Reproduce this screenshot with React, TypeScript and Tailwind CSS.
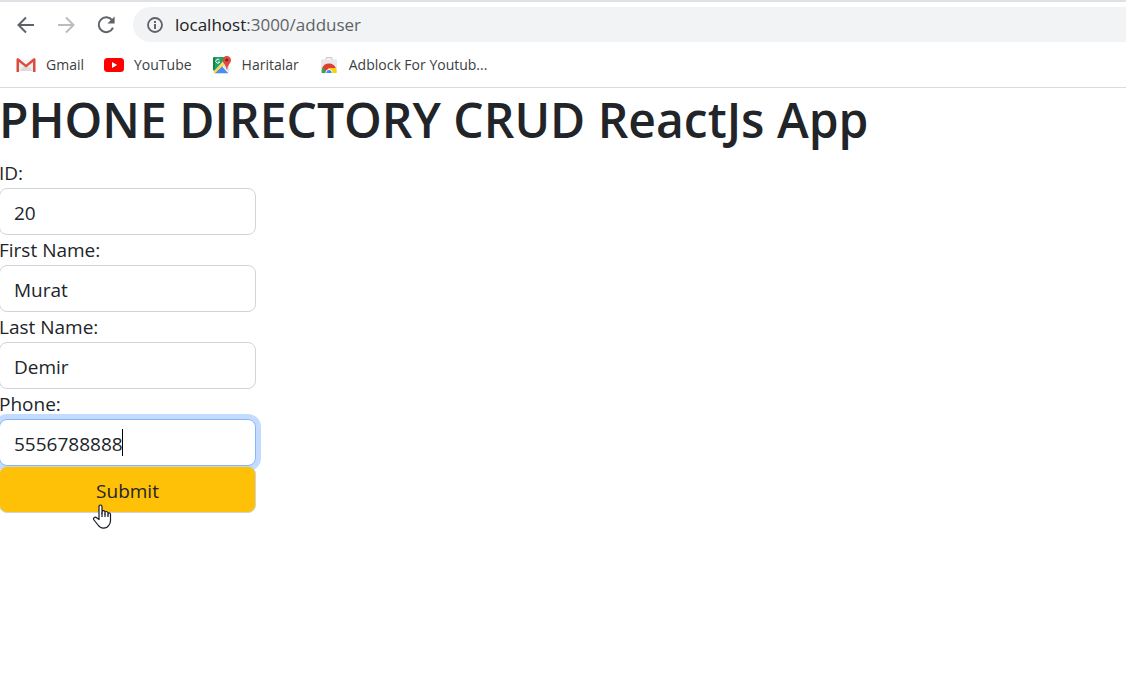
import React from "react";

const ArrowIcon = ({ flipped = false }: { flipped?: boolean }) => (
  <svg viewBox="0 0 18 18" className="h-[18px] w-[18px]" fill="none" stroke="currentColor" strokeWidth="2">
    <path d={flipped ? "M1 9H16M9 1.5L16.5 9L9 16.5" : "M17 9H2M9 1.5L1.5 9L9 16.5"} />
  </svg>
);

const ReloadIcon = () => (
  <svg viewBox="0 0 18 18" className="h-[18px] w-[18px]">
    <path d="M15.2 4.4A7.4 7.4 0 1 0 16 11.6" fill="none" stroke="currentColor" strokeWidth="2" />
    <path d="M17.6 0.6V7.4H10.4Z" fill="currentColor" />
  </svg>
);

const InfoIcon = () => (
  <svg viewBox="0 0 16 16" className="h-4 w-4 shrink-0">
    <circle cx="8" cy="8" r="7" fill="none" stroke="currentColor" strokeWidth="1.8" />
    <path d="M7 7h2v5H7zM7 4h2v2H7z" fill="currentColor" />
  </svg>
);

const GmailIcon = () => (
  <svg viewBox="0 0 20 20" className="h-5 w-5">
    <path d="M2 4h16v12H2z" fill="#eeeeee" />
    <path d="M3 16L10 9.5L17 16z" fill="#dcdcdc" />
    <path d="M2 4L10 10.5L18 4V4H2z" fill="#f6f6f6" />
    <path d="M0.5 4.5Q0.5 3 2 3L10 9.4L18 3Q19.5 3 19.5 4.5V17H17V7L10 12.4L3 7V17H0.5z" fill="#dc4b40" />
  </svg>
);

const YouTubeIcon = () => (
  <svg viewBox="0 0 20 20" className="h-5 w-5">
    <rect y="3" width="20" height="14" rx="3.5" fill="#ff0000" />
    <path d="M8 7L13.2 10L8 13z" fill="#ffffff" />
  </svg>
);

const MapsIcon = () => (
  <svg viewBox="0 0 20 20" className="h-5 w-5">
    <path d="M2 2h13L2 16.5z" fill="#1fa463" />
    <path d="M1 17L14.5 3.5L17 6L4 19z" fill="#ffd94f" />
    <path d="M3 18.3L10 11.5L16.5 18.3z" fill="#4c8bf5" />
    <path d="M10.5 11L16 6L17.5 17.5z" fill="#dcdfe3" />
    <path d="M1 2.5V15.8L3 14V2z" fill="#15824d" />
    <path d="M7.5 5A2 2 0 1 0 7.7 7H6" fill="none" stroke="#ffffff" strokeWidth="1" />
    <path d="M14.8 1C12.3 1 10.7 2.8 10.7 5C10.7 8.3 14 9.5 14.6 14.5H15.2C15.7 9.5 19 8.3 19 5C19 2.8 17.2 1 14.8 1z" fill="#e04a3f" />
    <circle cx="14.8" cy="5" r="1.6" fill="#7b231e" />
  </svg>
);

const WebStoreIcon = () => (
  <svg viewBox="0 0 20 20" className="h-5 w-5">
    <path d="M7 5V3.6Q7 2.7 8 2.7H12Q13 2.7 13 3.6V5" fill="none" stroke="#c8c8c8" strokeWidth="1.2" />
    <path d="M2 4.5h16v12.7q0 .8-.8.8H2.8q-.8 0-.8-.8z" fill="#e8e8e8" />
    <path d="M3.2 12.8A7.4 7.4 0 0 1 16.8 13H10L7 17z" fill="#df3e32" />
    <path d="M3.2 12.8Q2.4 15 2.7 18H8L6.8 15.8z" fill="#2ca653" />
    <path d="M10 13H17Q18 15.5 17.4 18H11.5z" fill="#fcd009" />
    <path d="M6.5 18V17a3.6 3.6 0 0 1 7 0v1z" fill="#ffffff" />
    <path d="M7.3 18V17a2.8 2.8 0 0 1 5.4 0v1z" fill="#4285f4" />
  </svg>
);

const HandPointer = () => (
  <svg viewBox="0 0 20 26" className="pointer-events-none absolute left-[94px] top-[38px] h-[26px] w-5">
    <path
      d="M6 15.5V2.8Q6 1 7.5 1T9 2.8V9.3V8Q9 6.6 10.4 6.6T12 8V10V8.8Q12 7.5 13.3 7.5T15 8.9V10.8V10Q15 8.9 16.1 8.9T17.5 10.2V16.5Q17.5 19.5 15.8 21.3Q14 24.2 10.5 24.2Q7 24 5 21L1 16Q.1 14.4 1.3 13.5T4 14L6 15.5z"
      fill="#ffffff"
      stroke="#17172b"
      strokeWidth="1.2"
      strokeLinejoin="round"
    />
    <path d="M9 8.5V13M12 9.5V13M15 10.5V13" stroke="#17172b" strokeWidth="1.2" />
  </svg>
);

const bookmarks = [
  { name: "Gmail", href: "#gmail", icon: <GmailIcon /> },
  { name: "YouTube", href: "#youtube", icon: <YouTubeIcon /> },
  { name: "Haritalar", href: "#maps", icon: <MapsIcon /> },
  { name: "Adblock For Youtub...", href: "#adblock", icon: <WebStoreIcon /> },
];

const fields = [
  { id: "id", label: "ID:", value: "20" },
  { id: "firstName", label: "First Name:", value: "Murat" },
  { id: "lastName", label: "Last Name:", value: "Demir" },
  { id: "phone", label: "Phone:", value: "5556788888", active: true },
];

export default function App() {
  return (
    <div className="min-h-screen overflow-x-hidden bg-white font-['Open_Sans','Noto_Sans',sans-serif] text-[#212529]">
      <header className="border-t-2 border-b border-t-[#dee1e6] border-b-[#dadce0]">
        <div className="flex items-center pt-[5px] pl-[17px] text-[#5f6368]">
          <nav aria-label="History" className="flex gap-[22px] pr-[18px]">
            <button type="button" aria-label="Back"><ArrowIcon /></button>
            <button type="button" aria-label="Forward" className="text-[#babcbe]"><ArrowIcon flipped /></button>
            <button type="button" aria-label="Reload"><ReloadIcon /></button>
          </nav>
          <div className="flex h-[35px] min-w-0 flex-1 items-center gap-3 rounded-l-full bg-[#f1f3f4] pl-[14px]">
            <InfoIcon />
            <a href="#adduser" className="text-[17px]">
              <span className="text-[#202124]">localhost</span>:3000/adduser
            </a>
          </div>
        </div>
        <nav aria-label="Bookmarks" className="flex h-[45px] items-center gap-5 pl-4 text-sm text-[#3c4043]">
          {bookmarks.map((b) => (
            <a key={b.name} href={b.href} className="flex items-center gap-[10px] whitespace-nowrap">
              {b.icon}
              {b.name}
            </a>
          ))}
        </nav>
      </header>
      <main className="-ml-px">
        <h1 className="mb-[6px] text-5xl leading-[64px] font-semibold">PHONE DIRECTORY CRUD ReactJs App</h1>
        <form className="w-[257px] text-[19px] leading-[30px]" onSubmit={(e) => e.preventDefault()}>
          {fields.map((f) => (
            <div key={f.id}>
              <label htmlFor={f.id} className="block">{f.label}</label>
              <div className="relative">
                <input
                  id={f.id}
                  defaultValue={f.value}
                  className={
                    f.active
                      ? "block h-[47px] w-full rounded-lg border border-[#86b7fe] bg-white px-[14px] pt-[2px] caret-transparent shadow-[0_0_0_5px_#c2dbfe] outline-none"
                      : "block h-[47px] w-full rounded-lg border border-[#ced4da] bg-white px-[14px] pt-[2px] outline-none"
                  }
                />
                {f.active && (
                  <span className="pointer-events-none absolute inset-y-[10px] left-0 flex pl-[14px]" aria-hidden="true">
                    <span className="invisible">{f.value}</span>
                    <span className="w-px bg-black" />
                  </span>
                )}
              </div>
            </div>
          ))}
          <div className="relative">
            <button type="submit" className="block h-[47px] w-full cursor-pointer rounded-lg border border-[#ced4da] bg-[#ffc107] pt-[2px] text-center">
              Submit
            </button>
            <HandPointer />
          </div>
        </form>
      </main>
    </div>
  );
}
